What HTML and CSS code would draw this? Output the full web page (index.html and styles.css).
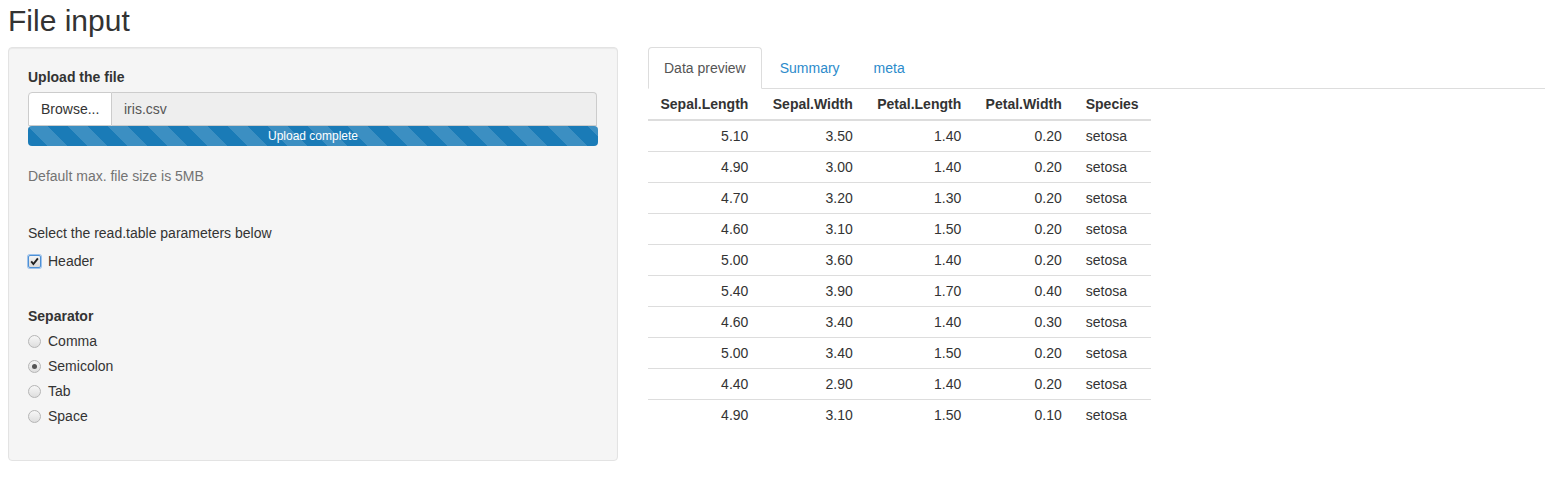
FILE: index.html
```html
<!DOCTYPE html>
<html lang="en">
<head>
<meta charset="utf-8">
<title>File input</title>
<link rel="stylesheet" href="styles.css">
</head>
<body>
<div class="page">
  <h2 class="title">File input</h2>
  <div class="layout">
    <div class="well">
      <div class="form-group">
        <label class="control-label">Upload the file</label>
        <div class="input-group">
          <span class="btn-browse">Browse...</span>
          <span class="file-name">iris.csv</span>
        </div>
        <div class="progress">
          <div class="progress-bar">Upload complete</div>
        </div>
      </div>
      <p class="help">Default max. file size is 5MB</p>
      <p class="para">Select the read.table parameters below</p>
      <div class="checkbox">
        <span class="check-box"><svg width="9" height="9" viewBox="0 0 9 9"><path d="M1.2 4.4 L3.4 7 L7.9 1.4" fill="none" stroke="#222" stroke-width="1.9"/></svg></span>
        <span class="opt-label">Header</span>
      </div>
      <div class="form-group sep-group">
        <label class="control-label">Separator</label>
        <div class="radio"><span class="radio-dot"></span><span class="opt-label">Comma</span></div>
        <div class="radio"><span class="radio-dot checked"></span><span class="opt-label">Semicolon</span></div>
        <div class="radio"><span class="radio-dot"></span><span class="opt-label">Tab</span></div>
        <div class="radio"><span class="radio-dot"></span><span class="opt-label">Space</span></div>
      </div>
    </div>
    <div class="main">
      <ul class="nav-tabs">
        <li class="active"><a>Data preview</a></li>
        <li><a>Summary</a></li>
        <li><a>meta</a></li>
      </ul>
      <table class="data">
        <thead>
          <tr><th class="num">Sepal.Length</th><th class="num">Sepal.Width</th><th class="num">Petal.Length</th><th class="num">Petal.Width</th><th>Species</th></tr>
        </thead>
        <tbody>
          <tr><td class="num">5.10</td><td class="num">3.50</td><td class="num">1.40</td><td class="num">0.20</td><td>setosa</td></tr>
          <tr><td class="num">4.90</td><td class="num">3.00</td><td class="num">1.40</td><td class="num">0.20</td><td>setosa</td></tr>
          <tr><td class="num">4.70</td><td class="num">3.20</td><td class="num">1.30</td><td class="num">0.20</td><td>setosa</td></tr>
          <tr><td class="num">4.60</td><td class="num">3.10</td><td class="num">1.50</td><td class="num">0.20</td><td>setosa</td></tr>
          <tr><td class="num">5.00</td><td class="num">3.60</td><td class="num">1.40</td><td class="num">0.20</td><td>setosa</td></tr>
          <tr><td class="num">5.40</td><td class="num">3.90</td><td class="num">1.70</td><td class="num">0.40</td><td>setosa</td></tr>
          <tr><td class="num">4.60</td><td class="num">3.40</td><td class="num">1.40</td><td class="num">0.30</td><td>setosa</td></tr>
          <tr><td class="num">5.00</td><td class="num">3.40</td><td class="num">1.50</td><td class="num">0.20</td><td>setosa</td></tr>
          <tr><td class="num">4.40</td><td class="num">2.90</td><td class="num">1.40</td><td class="num">0.20</td><td>setosa</td></tr>
          <tr><td class="num">4.90</td><td class="num">3.10</td><td class="num">1.50</td><td class="num">0.10</td><td>setosa</td></tr>
        </tbody>
      </table>
    </div>
  </div>
</div>
</body>
</html>
```

FILE: styles.css
```css
* { box-sizing: border-box; }
html, body { margin: 0; padding: 0; background: #fff; }
body {
  font-family: "Liberation Sans", Arial, Helvetica, sans-serif;
  font-size: 14px;
  line-height: 20px;
  color: #333;
}
.page { padding-left: 8px; }
.title {
  font-size: 30px;
  font-weight: normal;
  line-height: 33px;
  margin: 4px 0 10px 0;
  color: #333;
}
.layout { display: flex; gap: 30px; align-items: flex-start; }
.well {
  width: 610px;
  flex: none;
  background: #f5f5f5;
  border: 1px solid #e3e3e3;
  border-radius: 4px;
  padding: 19px;
  box-shadow: inset 0 1px 1px rgba(0,0,0,0.05);
}
.form-group { margin: 0 0 20px 0; }
.control-label { display: block; font-weight: bold; margin-bottom: 5px; }
.input-group { display: flex; height: 34px; }
.btn-browse {
  width: 84px;
  flex: none;
  background: #fff;
  border: 1px solid #ccc;
  border-radius: 4px 0 0 0;
  padding: 6px 12px;
  line-height: 20px;
  color: #333;
}
.file-name {
  flex: 1;
  background: #eee;
  border: 1px solid #ccc;
  border-left: none;
  border-radius: 0 4px 0 0;
  padding: 6px 12px;
  line-height: 20px;
  color: #555;
  margin-right: 1px;
}
.progress {
  height: 20px;
  border-radius: 4px;
  overflow: hidden;
  background: #f5f5f5;
}
.progress-bar {
  height: 20px;
  background-color: #1a7bb7;
  background-image: linear-gradient(45deg, rgba(255,255,255,0.15) 25%, transparent 25%, transparent 50%, rgba(255,255,255,0.15) 50%, rgba(255,255,255,0.15) 75%, transparent 75%, transparent);
  background-size: 40px 40px;
  color: #fff;
  font-size: 12px;
  line-height: 20px;
  text-align: center;
}
.help { color: #737373; margin: 0 0 37px 0; }
.para { margin: 0; }
.checkbox {
  display: flex;
  align-items: center;
  margin: 8px 0 35px 0;
  height: 20px;
}
.check-box {
  width: 13px;
  height: 13px;
  margin-right: 7px;
  border: 1px solid #4d90d6;
  border-radius: 2px;
  box-shadow: 0 0 0 1px #9ec3ec;
  background: linear-gradient(#f4f4f4, #d9d9d9);
  display: flex;
  align-items: center;
  justify-content: center;
}
.check-box svg { display: block; }
.sep-group { margin-bottom: 15px; }
.sep-group .control-label { margin-bottom: 0; }
.radio {
  display: flex;
  align-items: center;
  height: 20px;
  margin-top: 5px;
}
.radio-dot {
  width: 13px;
  height: 13px;
  margin-right: 7px;
  border-radius: 50%;
  border: 1px solid #b5b5b5;
  background: linear-gradient(#f7f7f7, #dedede);
  display: flex;
  align-items: center;
  justify-content: center;
}
.radio-dot.checked::after {
  content: "";
  width: 5px;
  height: 5px;
  border-radius: 50%;
  background: #555;
}
.main { flex: 1; }
.nav-tabs {
  list-style: none;
  margin: 0;
  padding: 0;
  display: flex;
  border-bottom: 1px solid #ddd;
}
.nav-tabs li { margin-bottom: -1px; margin-right: 2px; }
.nav-tabs a {
  display: block;
  padding: 10px 15px;
  line-height: 20px;
  border: 1px solid transparent;
  border-radius: 4px 4px 0 0;
  color: #2c8bcb;
}
.nav-tabs li.active a {
  color: #555;
  background: #fff;
  border-color: #ddd #ddd transparent #ddd;
}
.data { border-collapse: collapse; width: 503px; }
.data th, .data td { padding: 5px 12px; line-height: 20px; text-align: left; }
.data th { font-weight: bold; border-bottom: 2px solid #ddd; }
.data td { border-top: 1px solid #ddd; }
.data .num { text-align: right; }
```
